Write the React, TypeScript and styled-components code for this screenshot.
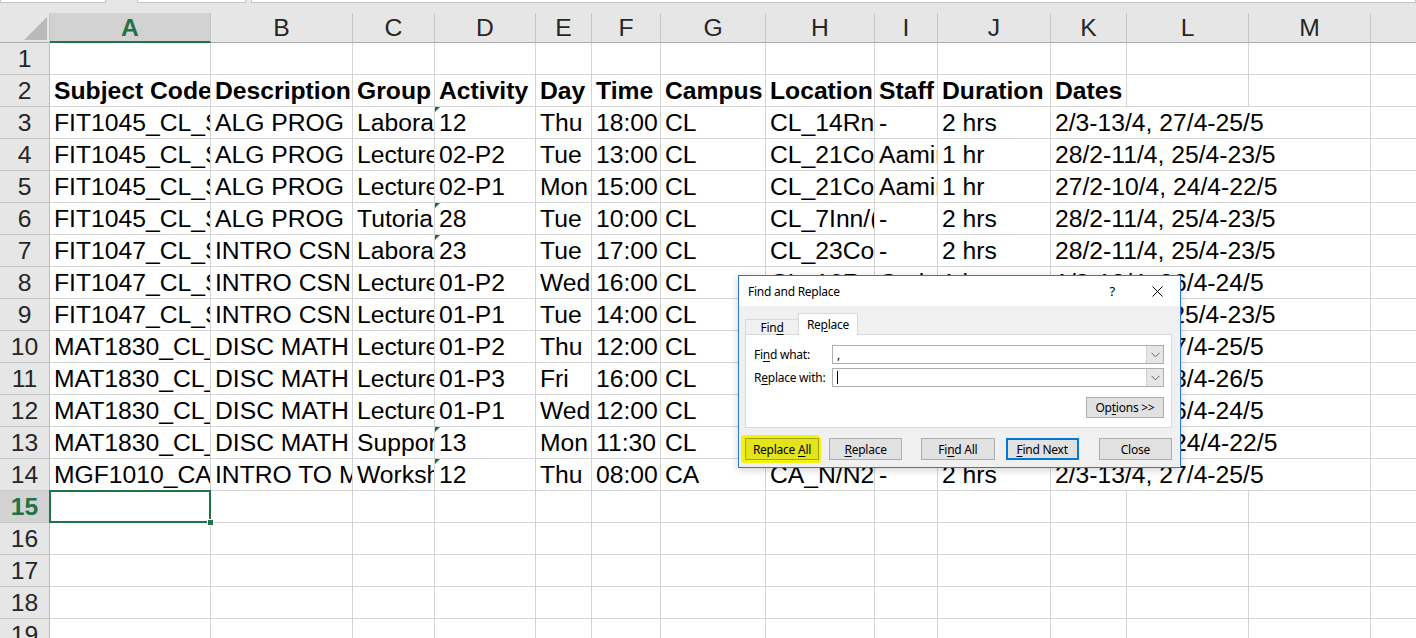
import React from 'react';
import styled, { createGlobalStyle, css } from 'styled-components';

const GlobalStyle = createGlobalStyle`
  html, body { margin: 0; padding: 0; background: #fff; overflow: hidden; }
  #root { width: 1416px; height: 638px; }
`;

const LETTERS = ['A', 'B', 'C', 'D', 'E', 'F', 'G', 'H', 'I', 'J', 'K', 'L', 'M', 'N'];

const FIT45 = 'FIT1045_CL_S1_ON-CAMPUS';
const FIT47 = 'FIT1047_CL_S1_ON-CAMPUS';
const MAT = 'MAT1830_CL_S1_ON-CAMPUS';

const DATA: Record<number, string[]> = {
  2: ['Subject Code', 'Description', 'Group', 'Activity', 'Day', 'Time', 'Campus', 'Location', 'Staff', 'Duration', 'Dates'],
  3: [FIT45, 'ALG PROG', 'Laboratory', '12', 'Thu', '18:00', 'CL', 'CL_14Rnf/G27', '-', '2 hrs', '2/3-13/4, 27/4-25/5'],
  4: [FIT45, 'ALG PROG', 'Lecture', '02-P2', 'Tue', '13:00', 'CL', 'CL_21Coll/G16', 'Aamir Cheema', '1 hr', '28/2-11/4, 25/4-23/5'],
  5: [FIT45, 'ALG PROG', 'Lecture', '02-P1', 'Mon', '15:00', 'CL', 'CL_21Coll/G16', 'Aamir Cheema', '1 hr', '27/2-10/4, 24/4-22/5'],
  6: [FIT45, 'ALG PROG', 'Tutorial', '28', 'Tue', '10:00', 'CL', 'CL_7Inn/(G08)', '-', '2 hrs', '28/2-11/4, 25/4-23/5'],
  7: [FIT47, 'INTRO CSNS', 'Laboratory', '23', 'Tue', '17:00', 'CL', 'CL_23Coll/G25', '-', '2 hrs', '28/2-11/4, 25/4-23/5'],
  8: [FIT47, 'INTRO CSNS', 'Lecture', '01-P2', 'Wed', '16:00', 'CL', 'CL_16Rnf/S1', 'Carlo Kopp', '1 hr', '1/3-12/4, 26/4-24/5'],
  9: [FIT47, 'INTRO CSNS', 'Lecture', '01-P1', 'Tue', '14:00', 'CL', 'CL_16Rnf/S1', 'Carlo Kopp', '1 hr', '28/2-11/4, 25/4-23/5'],
  10: [MAT, 'DISC MATH', 'Lecture', '01-P2', 'Thu', '12:00', 'CL', 'CL_16Rnf/S1', 'Graham Farr', '1 hr', '2/3-13/4, 27/4-25/5'],
  11: [MAT, 'DISC MATH', 'Lecture', '01-P3', 'Fri', '16:00', 'CL', 'CL_16Rnf/S1', 'Graham Farr', '1 hr', '3/3-14/4, 28/4-26/5'],
  12: [MAT, 'DISC MATH', 'Lecture', '01-P1', 'Wed', '12:00', 'CL', 'CL_16Rnf/S1', 'Graham Farr', '1 hr', '1/3-12/4, 26/4-24/5'],
  13: [MAT, 'DISC MATH', 'Support', '13', 'Mon', '11:30', 'CL', 'CL_20Chn/137', '-', '1 hr', '27/2-10/4, 24/4-22/5'],
  14: ['MGF1010_CA_S1_ON-CAMPUS', 'INTRO TO MATHS', 'Workshop', '12', 'Thu', '08:00', 'CA', 'CA_N/N2.07', '-', '2 hrs', '2/3-13/4, 27/4-25/5'],
};

const FLAGGED = new Set([3, 6, 7, 13, 14]);
const ROW_COUNT = 19;
const SELECTED_ROW = 15;

const Page = styled.div`
  position: relative;
  width: 1416px;
  height: 638px;
  overflow: hidden;
  background: #fff;
  font-family: "Liberation Sans", Arial, sans-serif;
`;

const TopStrip = styled.div`
  display: flex;
  height: 13px;
  background: #e6e6e6;
  align-items: flex-start;
`;

const BarBox = styled.div<{ $w?: number; $ml?: number }>`
  box-sizing: border-box;
  height: 3px;
  width: ${(p) => (p.$w ? `${p.$w}px` : 'auto')};
  flex: ${(p) => (p.$w ? 'none' : '1')};
  margin-left: ${(p) => p.$ml ?? 0}px;
  background: #fff;
  border: 1px solid #c6c6c6;
  border-top: none;
`;

const Sheet = styled.div`
  display: grid;
  grid-template-columns: 50px 161px 142px 82px 101px 56px 69px 105px 109px 63px 113px 76px 122px 122px 122px;
  grid-template-rows: 30px;
  grid-auto-rows: 32px;
  width: max-content;
`;

const Corner = styled.div`
  box-sizing: border-box;
  background: #e6e6e6;
  border-right: 1px solid #c6c6c6;
  border-bottom: 1px solid #ababab;
  display: flex;
  align-items: flex-end;
  justify-content: flex-end;
  padding: 0 2px 2px 0;
`;

const ColHeader = styled.div<{ $active?: boolean }>`
  box-sizing: border-box;
  background: #e6e6e6;
  border-right: 1px solid #c6c6c6;
  border-bottom: 1px solid #ababab;
  text-align: center;
  font-size: 24.7px;
  line-height: 30px;
  color: #262626;
  overflow: hidden;
  ${(p) =>
    p.$active &&
    css`
      background: #d2d2d2;
      color: #217346;
      font-weight: bold;
      border-bottom: 2px solid #217346;
      line-height: 29px;
    `}
`;

const RowHead = styled.div<{ $active?: boolean }>`
  box-sizing: border-box;
  background: #e6e6e6;
  border-right: 1px solid #bdbdbd;
  border-bottom: 1px solid #c6c6c6;
  text-align: center;
  font-size: 24.7px;
  line-height: 31px;
  color: #262626;
  ${(p) =>
    p.$active &&
    css`
      background: #d2d2d2;
      color: #217346;
      font-weight: bold;
    `}
`;

const Cell = styled.div<{ $bold?: boolean; $span?: number; $flag?: boolean; $selected?: boolean }>`
  box-sizing: border-box;
  position: relative;
  border-right: 1px solid #d4d4d4;
  border-bottom: 1px solid #d4d4d4;
  padding: 0 4px;
  overflow: hidden;
  white-space: nowrap;
  font-size: 24.7px;
  line-height: 31px;
  color: #000;
  font-weight: ${(p) => (p.$bold ? 'bold' : 'normal')};
  grid-column: span ${(p) => p.$span ?? 1};
  ${(p) =>
    p.$flag &&
    css`
      &::before {
        content: '';
        position: absolute;
        top: 0;
        left: 0;
        border-top: 5px solid #1e7145;
        border-right: 5px solid transparent;
      }
    `}
  ${(p) =>
    p.$selected &&
    css`
      overflow: visible;
      &::after {
        content: '';
        position: absolute;
        top: -1px;
        left: -1px;
        right: -1px;
        bottom: -1px;
        border: 2px solid #217346;
        z-index: 2;
      }
      &::before {
        content: '';
        position: absolute;
        right: -4px;
        bottom: -4px;
        width: 5px;
        height: 5px;
        background: #217346;
        border: 1px solid #fff;
        z-index: 3;
      }
    `}
`;

/* ---------- dialog ---------- */

const DialogBox = styled.div`
  position: absolute;
  left: 738px;
  top: 275px;
  width: 443px;
  box-sizing: border-box;
  border: 1px solid #2b79d0;
  background: #f0f0f0;
  font-family: "Noto Sans", "Segoe UI", sans-serif;
  font-size: 12px;
  letter-spacing: -0.25px;
  color: #000;
  z-index: 5;
  box-shadow: 0 2px 8px rgba(0, 0, 0, 0.18);
`;

const TitleBar = styled.div`
  height: 30px;
  background: #fff;
  display: flex;
  align-items: center;
  padding: 0 17px 0 9px;
`;

const Title = styled.div`
  flex: 1;
`;

const HelpGlyph = styled.span`
  margin-right: 37px;
  font-size: 13px;
`;

const DialogBody = styled.div`
  padding: 7px 8px 7px 6px;
`;

const TabStrip = styled.div`
  display: flex;
  align-items: flex-end;
`;

const Tab = styled.div<{ $active?: boolean; $w: number }>`
  box-sizing: border-box;
  width: ${(p) => p.$w}px;
  height: ${(p) => (p.$active ? 22 : 15)}px;
  display: flex;
  align-items: center;
  justify-content: center;
  border: 1px solid #d9d9d9;
  border-bottom: none;
  background: ${(p) => (p.$active ? '#fff' : '#f0f0f0')};
  margin-bottom: ${(p) => (p.$active ? -1 : 0)}px;
  position: relative;
  z-index: ${(p) => (p.$active ? 1 : 0)};
  ${(p) =>
    !p.$active &&
    css`
      border-right: none;
    `}
`;

const Panel = styled.div`
  box-sizing: border-box;
  width: 427px;
  background: #fff;
  border: 1px solid #d9d9d9;
  padding: 10px 7px 9px 8px;
`;

const FieldGrid = styled.div`
  display: grid;
  grid-template-columns: 78px 1fr;
  row-gap: 4px;
  align-items: center;
`;

const Label = styled.span`
  white-space: nowrap;
`;

const ComboBox = styled.div`
  box-sizing: border-box;
  height: 19px;
  display: flex;
  border: 1px solid #adadad;
  background: #fff;
`;

const ComboText = styled.div`
  flex: 1;
  padding-left: 4px;
  line-height: 16px;
  display: flex;
  align-items: center;
`;

const Caret = styled.span`
  display: inline-block;
  width: 1px;
  height: 13px;
  background: #000;
`;

const DropButton = styled.div`
  width: 16px;
  background: #e6e6e6;
  border-left: 1px solid #cfcfcf;
  display: flex;
  align-items: center;
  justify-content: center;
`;

const OptionsRow = styled.div`
  display: flex;
  justify-content: flex-end;
  margin-top: 10px;
`;

const ButtonRow = styled.div`
  display: flex;
  align-items: center;
  margin-top: 10px;
`;

const DlgButton = styled.div<{ $w?: number; $ml?: number; $primary?: boolean; $marked?: boolean }>`
  box-sizing: border-box;
  width: ${(p) => p.$w ?? 74}px;
  height: ${(p) => (p.$w ? 21 : 22)}px;
  margin-left: ${(p) => p.$ml ?? 0}px;
  display: flex;
  align-items: center;
  justify-content: center;
  background: #e1e1e1;
  border: 1px solid #adadad;
  white-space: nowrap;
  ${(p) =>
    p.$primary &&
    css`
      border: 2px solid #0078d7;
    `}
  ${(p) =>
    p.$marked &&
    css`
      background: #e4e41c;
      border-color: #a3a30e;
    `}
`;

const ButtonLabel = styled.span`
  white-space: pre;
`;

const Mark = styled.span`
  display: inline-flex;
  padding: 3px 2px 3px 4px;
  margin: -3px 0 -3px -4px;
  background: #f3f30b;
  border-radius: 2px 5px 3px 4px;
`;

const Key = styled.span`
  text-decoration: underline;
  text-underline-offset: 2px;
`;

const CornerTriangle = () => (
  <svg width="23" height="23" viewBox="0 0 23 23">
    <polygon points="23,0 23,23 0,23" fill="#b9b9b9" />
  </svg>
);

const Chevron = () => (
  <svg width="9" height="6" viewBox="0 0 9 6">
    <polyline points="0.5,0.8 4.5,4.8 8.5,0.8" fill="none" stroke="#606060" strokeWidth="1" />
  </svg>
);

const CloseX = () => (
  <svg width="11" height="11" viewBox="0 0 11 11">
    <line x1="0.5" y1="0.5" x2="10.5" y2="10.5" stroke="#000" strokeWidth="1" />
    <line x1="10.5" y1="0.5" x2="0.5" y2="10.5" stroke="#000" strokeWidth="1" />
  </svg>
);

function renderRow(r: number) {
  const vals = DATA[r] ?? [];
  const out: React.ReactNode[] = [];
  out.push(
    <RowHead key={`h${r}`} $active={r === SELECTED_ROW}>
      {r}
    </RowHead>
  );
  let c = 0;
  while (c < LETTERS.length) {
    const v = vals[c] ?? '';
    const isDates = c === 10 && r >= 3 && v.length > 0;
    out.push(
      <Cell
        key={`${r}-${c}`}
        $bold={r === 2}
        $span={isDates ? 3 : 1}
        $flag={c === 3 && FLAGGED.has(r)}
        $selected={r === SELECTED_ROW && c === 0}
      >
        {v}
      </Cell>
    );
    c += isDates ? 3 : 1;
  }
  return out;
}

const FindReplaceDialog = () => (
  <DialogBox>
    <TitleBar>
      <Title>Find and Replace</Title>
      <HelpGlyph>?</HelpGlyph>
      <CloseX />
    </TitleBar>
    <DialogBody>
      <TabStrip>
        <Tab $w={53}>
          <ButtonLabel>
            Fin<Key>d</Key>
          </ButtonLabel>
        </Tab>
        <Tab $w={60} $active>
          <ButtonLabel>
            Re<Key>p</Key>lace
          </ButtonLabel>
        </Tab>
      </TabStrip>
      <Panel>
        <FieldGrid>
          <Label>
            Fi<Key>n</Key>d what:
          </Label>
          <ComboBox>
            <ComboText>,</ComboText>
            <DropButton>
              <Chevron />
            </DropButton>
          </ComboBox>
          <Label>
            R<Key>e</Key>place with:
          </Label>
          <ComboBox>
            <ComboText>
              <Caret />
            </ComboText>
            <DropButton>
              <Chevron />
            </DropButton>
          </ComboBox>
        </FieldGrid>
        <OptionsRow>
          <DlgButton $w={78}>
            <ButtonLabel>
              Op<Key>t</Key>ions &gt;&gt;
            </ButtonLabel>
          </DlgButton>
        </OptionsRow>
      </Panel>
      <ButtonRow>
        <Mark>
          <DlgButton $marked>
            <ButtonLabel>
              {'Replace '}
              <Key>A</Key>ll
            </ButtonLabel>
          </DlgButton>
        </Mark>
        <DlgButton $ml={8}>
          <ButtonLabel>
            <Key>R</Key>eplace
          </ButtonLabel>
        </DlgButton>
        <DlgButton $ml={19}>
          <ButtonLabel>
            Fi<Key>n</Key>d All
          </ButtonLabel>
        </DlgButton>
        <DlgButton $ml={11} $primary>
          <ButtonLabel>
            <Key>F</Key>ind Next
          </ButtonLabel>
        </DlgButton>
        <DlgButton $ml={20}>
          <ButtonLabel>Close</ButtonLabel>
        </DlgButton>
      </ButtonRow>
    </DialogBody>
  </DialogBox>
);

export default function App() {
  const rows: React.ReactNode[] = [];
  for (let r = 1; r <= ROW_COUNT; r++) rows.push(...renderRow(r));
  return (
    <>
      <GlobalStyle />
      <Page>
        <TopStrip>
          <BarBox $w={106} />
          <BarBox $w={109} $ml={31} />
          <BarBox $ml={5} />
        </TopStrip>
        <Sheet>
          <Corner>
            <CornerTriangle />
          </Corner>
          {LETTERS.map((l, i) => (
            <ColHeader key={l} $active={i === 0}>
              {l}
            </ColHeader>
          ))}
          {rows}
        </Sheet>
        <FindReplaceDialog />
      </Page>
    </>
  );
}
